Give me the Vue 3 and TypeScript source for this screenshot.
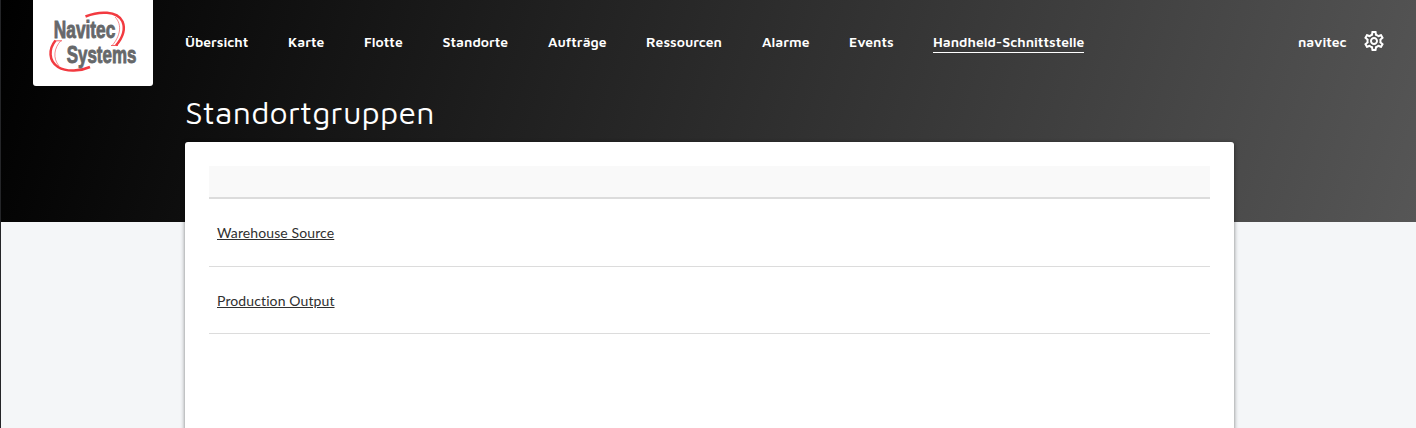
<script setup lang="ts">
interface NavItem {
  label: string
  width: number
  active?: boolean
}

const items: NavItem[] = [
  { label: 'Übersicht', width: 63 },
  { label: 'Karte', width: 36 },
  { label: 'Flotte', width: 38.5 },
  { label: 'Standorte', width: 65.5 },
  { label: 'Aufträge', width: 58 },
  { label: 'Ressourcen', width: 76 },
  { label: 'Alarme', width: 47 },
  { label: 'Events', width: 44 },
  { label: 'Handheld-Schnittstelle', width: 151, active: true },
]

const groups: string[] = ['Warehouse Source', 'Production Output']
</script>

<template>
  <div class="page">
    <header class="hero">
      <div class="topbar">
        <a class="logo">
          <svg width="120" height="86" viewBox="0 0 120 86">
            <g fill="none" stroke="#f23a40">
              <path d="M52.500 16.500C66 11 84 10.500 89.500 21.500C93 30 88.500 39 83 45.500" stroke-width="2.500" />
              <path d="M82 17C90 25 86.500 37 79.500 45" stroke-width="0.600" />
              <path d="M22.500 40.500C15.500 49 15.500 61 25 67C34 72.500 48 71 57 67" stroke-width="2.500" />
              <path d="M28 40.500C21 48 19.500 58 26 66" stroke-width="0.600" />
              <path d="M22 40.800H29M78 45.500H85" stroke-width="0.800" />
            </g>
            <g class="logo-text">
              <text transform="translate(20.800 38) scale(0.720 1)">Navitec</text>
              <text transform="translate(33.800 62.500) scale(0.704 1)">Systems</text>
            </g>
          </svg>
        </a>
        <nav class="menu">
          <a
            v-for="item in items"
            :key="item.label"
            class="link"
            :class="{ active: item.active }"
            :style="{ width: item.width + 'px' }"
          >{{ item.label }}</a>
        </nav>
        <div class="account">
          <span class="user">navitec</span>
          <svg class="gear" width="24" height="24" viewBox="0 0 24 24" fill="#fff">
            <path d="M19.43 12.98c.04-.32.07-.64.07-.98 0-.34-.03-.66-.07-.98l2.11-1.65c.19-.15.24-.42.12-.64l-2-3.46c-.09-.16-.26-.25-.44-.25-.06 0-.12.01-.17.03l-2.49 1c-.52-.4-1.08-.73-1.69-.98l-.38-2.65C14.46 2.18 14.25 2 14 2h-4c-.25 0-.46.18-.49.42l-.38 2.65c-.61.25-1.17.59-1.69.98l-2.49-1c-.06-.02-.12-.03-.18-.03-.17 0-.34.09-.43.25l-2 3.46c-.13.22-.07.49.12.64l2.11 1.65c-.04.32-.07.65-.07.98 0 .33.03.66.07.98l-2.11 1.65c-.19.15-.24.42-.12.64l2 3.46c.09.16.26.25.44.25.06 0 .12-.01.17-.03l2.49-1c.52.4 1.08.73 1.69.98l.38 2.65c.03.24.24.42.49.42h4c.25 0 .46-.18.49-.42l.38-2.65c.61-.25 1.17-.59 1.69-.98l2.49 1c.06.02.12.03.18.03.17 0 .34-.09.43-.25l2-3.46c.12-.22.07-.49-.12-.64l-2.11-1.65zm-1.98-1.71c.04.31.05.52.05.73 0 .21-.02.43-.05.73l-.14 1.13.89.7 1.08.84-.7 1.21-1.27-.51-1.04-.42-.9.68c-.43.32-.84.56-1.25.73l-1.06.43-.16 1.13-.2 1.35h-1.4l-.19-1.35-.16-1.13-1.06-.43c-.43-.18-.83-.41-1.23-.71l-.91-.7-1.06.43-1.27.51-.7-1.21 1.08-.84.89-.7-.14-1.13c-.03-.31-.05-.54-.05-.74s.02-.43.05-.73l.14-1.13-.89-.7-1.08-.84.7-1.21 1.27.51 1.04.42.9-.68c.43-.32.84-.56 1.25-.73l1.06-.43.16-1.13.2-1.35h1.39l.19 1.35.16 1.13 1.06.43c.43.18.83.41 1.23.71l.91.7 1.06-.43 1.27-.51.7 1.21-1.07.85-.89.7.14 1.13zM12 8c-2.21 0-4 1.79-4 4s1.79 4 4 4 4-1.79 4-4-1.79-4-4-4zm0 6c-1.1 0-2-.9-2-2s.9-2 2-2 2 .9 2 2-.9 2-2 2z" />
          </svg>
        </div>
      </div>
      <h1 class="title">Standortgruppen</h1>
    </header>
    <main class="card">
      <div class="thead"></div>
      <div v-for="group in groups" :key="group" class="row">
        <a class="group">{{ group }}</a>
      </div>
    </main>
  </div>
</template>

<style>
body {
  margin: 0;
  overflow: hidden;
}
</style>

<style scoped>
.page {
  box-sizing: border-box;
  height: 428px;
  overflow: hidden;
  border-left: 1px solid #242528;
  background: #f4f6f8;
}
.hero {
  height: 222px;
  background: linear-gradient(108deg, #000 0%, #565656 100%);
  color: #fff;
  font-family: 'Maven Pro', Roboto, sans-serif;
}
.topbar {
  display: flex;
  align-items: flex-start;
  height: 86px;
  padding: 0 30px 0 32px;
}
.logo {
  width: 120px;
  height: 86px;
  flex: none;
  border-radius: 0 0 3px 3px;
  background: #fff;
}
.logo svg {
  display: block;
}
.logo-text {
  fill: #66686a;
  font: bold 24px 'Liberation Sans', sans-serif;
  stroke: #66686a;
  stroke-width: 0.9;
}
.menu {
  display: flex;
  gap: 40px;
  margin: 32px 0 0 32px;
}
.link {
  box-sizing: border-box;
  height: 21px;
  font-size: 14px;
  font-weight: 600;
  line-height: 20px;
  white-space: nowrap;
}
.active {
  border-bottom: 1px solid #fff;
}
.account {
  display: flex;
  gap: 16px;
  margin: 29px 0 0 auto;
}
.user {
  width: 48px;
  font-size: 14px;
  font-weight: 600;
  line-height: 26px;
}
.title {
  margin: 6px 0 0 184px;
  font-size: 32px;
  font-weight: 400;
  line-height: 40px;
  letter-spacing: 0.22px;
}
.card {
  box-sizing: border-box;
  position: relative;
  width: 1049px;
  height: 310px;
  margin: -80px 0 0 184px;
  padding: 24px;
  border-radius: 3px;
  background: #fff;
  box-shadow: 0 1px 4px rgba(0, 0, 0, 0.5);
}
.thead {
  box-sizing: border-box;
  height: 33px;
  border-bottom: 2px solid #dcdcdc;
  background: #f9f9f9;
}
.row {
  box-sizing: border-box;
  height: 67.5px;
  padding: 24px 8px 0;
  border-bottom: 1px solid #dcdcdc;
}
.group {
  color: #303030;
  font-family: Lato, sans-serif;
  font-size: 14px;
  line-height: 20px;
  letter-spacing: 0.11px;
  font-variant-ligatures: none;
  text-decoration: underline;
}
</style>
